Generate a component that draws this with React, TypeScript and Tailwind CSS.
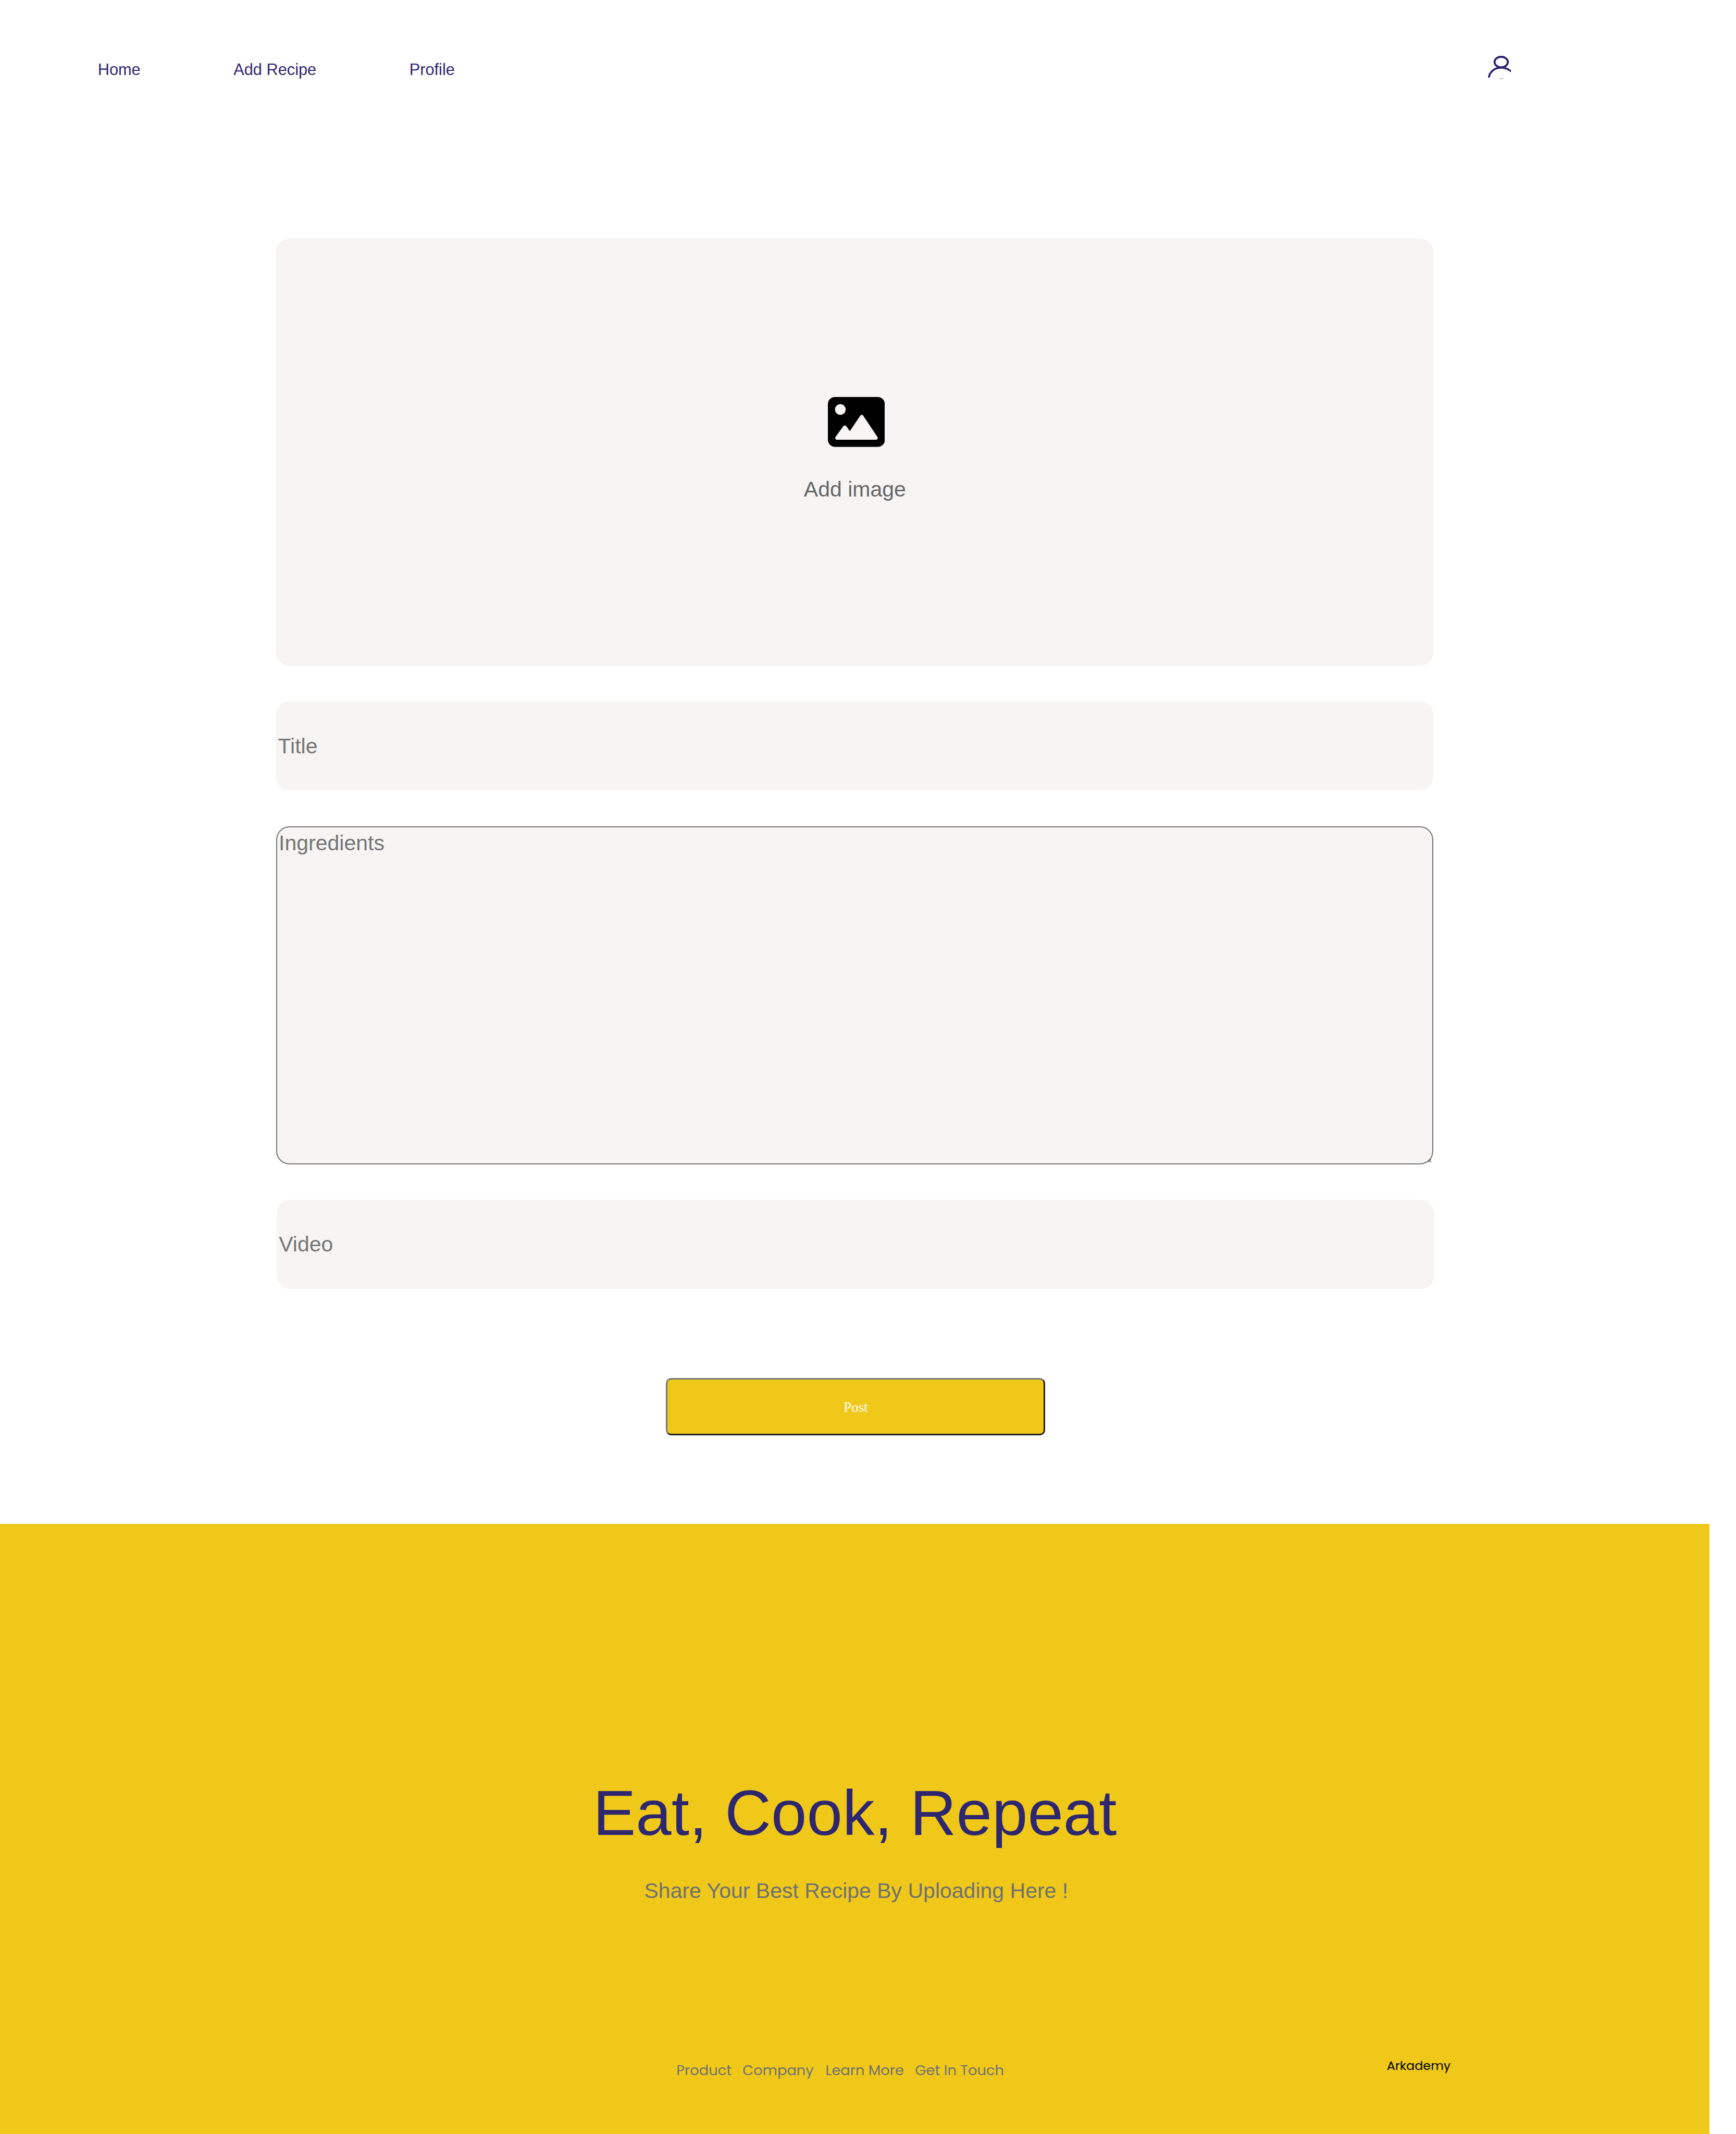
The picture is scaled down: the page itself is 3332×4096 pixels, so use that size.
const footerLinks = [
  { label: "Product", className: "w-[127px]" },
  { label: "Company", className: "w-[159.4px]" },
  { label: "Learn More", className: "w-[171.7px]" },
  { label: "Get In Touch", className: "" },
];

function UserIcon() {
  return (
    <svg viewBox="120 100 170 165" className="h-[46.99px] w-[48.41px]" fill="none" stroke="#2E266F">
      <ellipse cx="216" cy="146" rx="45" ry="35.5" strokeWidth="13.5" />
      <path d="M133.500 251C135 213 172 184 216 184C242 184 265 193 284 210" strokeWidth="13.5" />
      <path d="M204 257H229" strokeWidth="3" strokeOpacity="0.6" />
      <rect x="282" y="190" width="8" height="40" fill="#fff" stroke="none" />
    </svg>
  );
}

function ImageIcon() {
  return (
    <svg viewBox="0 32 512 448" className="ml-[6px] h-[95.7px] w-[109.4px]" fill="#000">
      <path d="M448 32H64C28.65 32 0 60.65 0 96v320c0 35.35 28.65 64 64 64h384c35.35 0 64-28.65 64-64V96C512 60.65 483.3 32 448 32zM112 96c26.51 0 48 21.49 48 48S138.500 192 112 192s-48-21.490-48-48S85.480 96 112 96zM446.100 407.600C443.300 412.800 437.900 416 432 416H82.010c-6.021 0-11.530-3.379-14.260-8.750c-2.730-5.367-2.215-11.810 1.334-16.680l70-96C142.100 290.400 146.900 288 152 288s9.916 2.441 12.930 6.574l32.460 44.510l93.300-139.100C293.700 194.700 298.700 192 304 192s10.350 2.672 13.310 7.125l128 192C448.600 396 448.900 402.300 446.100 407.600z" />
    </svg>
  );
}

export default function App() {
  return (
    <div className="flex h-[4096px] w-[3332px] flex-col overflow-hidden bg-white font-['Liberation_Sans',Arial,sans-serif]">
      <header className="flex h-[457.9px] w-[3280.7px] shrink-0 items-start justify-between pl-[187.7px]">
        <nav className="flex gap-[178.5px] pt-[119px] text-[30.76px] leading-none text-[#2E266F]">
          <a>Home</a>
          <a>Add Recipe</a>
          <a>Profile</a>
        </nav>
        <div className="pt-[106px] pr-[378.500px]">
          <UserIcon />
        </div>
      </header>

      <main className="ml-[529.7px] flex h-[2467.4px] w-[2221.3px] shrink-0 flex-col gap-[68.35px] text-[41.01px] leading-none text-[#757575]">
        <div className="flex h-[820.2px] shrink-0 flex-col items-center rounded-[25.6px] bg-[#F6F5F4] pt-[304.2px] text-[#666666]">
          <ImageIcon />
          <span className="mt-[61.5px] pl-px">Add image</span>
        </div>
        <div className="flex h-[170.9px] shrink-0 items-center rounded-[25.6px] bg-[#F6F5F4] pt-px pl-[3.9px]">Title</div>
        <div className="relative h-[649.3px] shrink-0 rounded-[25.6px] border-2 border-[#767676] bg-[#F6F5F4] pt-[10px] pl-[3.4px]">
          Ingredients
          <svg viewBox="0 0 7 7" className="absolute right-[2px] bottom-[2px] size-[6px]" stroke="#444" strokeWidth="1.3">
            <path d="M0 7L7 0M4 7L7 4" />
          </svg>
        </div>
        <div className="-mr-[1.7px] ml-[1.7px] flex h-[170.9px] shrink-0 items-center rounded-[25.6px] bg-[#F6F5F4] pl-[3.9px]">Video</div>
        <button className="mt-[102.900px] ml-[748.8px] h-[109.4px] w-[727.9px] shrink-0 rounded-[10px] border-[3.4px] border-t-[#767676] border-r-[#212121] border-b-[#212121] border-l-[#767676] bg-[#EFC81A] pt-[4px] font-['Liberation_Serif','Times_New_Roman',serif] text-[27.34px] leading-none text-white">
          Post
        </button>
      </main>

      <footer className="flex w-[3280.7px] grow flex-col bg-[#EFC81A] pt-[492.3px] text-center leading-none">
        <h1 className="pl-px text-[123.03px] leading-none text-[#2E266F]">Eat, Cook, Repeat</h1>
        <p className="mt-[68.5px] pl-[6px] text-[41.01px] leading-none text-[#707070]">Share Your Best Recipe By Uploading Here !</p>
        <div className="mt-[302.500px] flex items-start pl-[1298.2px] text-left font-['Poppins','Inter',sans-serif] whitespace-nowrap">
          <div className="mt-[7px] flex w-[1363.500px] shrink-0 text-[27.34px] leading-none text-[#707070]">
            {footerLinks.map((link) => (
              <a key={link.label} className={link.className}>{link.label}</a>
            ))}
          </div>
          <span className="text-[23.92px] leading-none text-black">Arkademy</span>
        </div>
      </footer>
    </div>
  );
}
